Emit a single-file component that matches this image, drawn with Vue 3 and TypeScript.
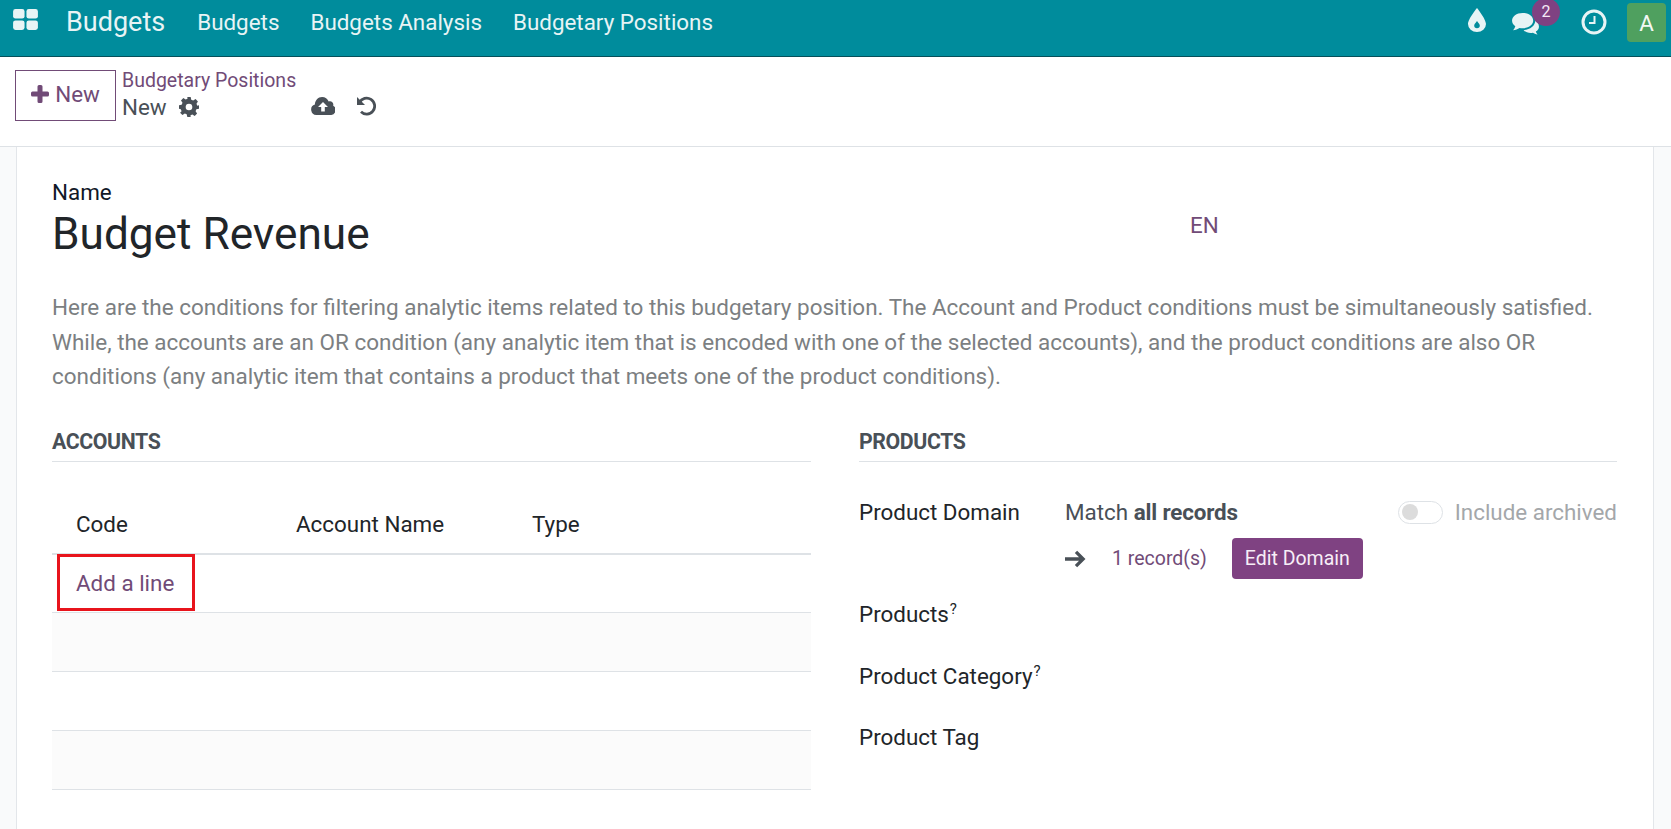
<script setup lang="ts">
const navItems: string[] = ['Budgets', 'Budgets Analysis', 'Budgetary Positions']
const columns: { label: string; width: string }[] = [
  { label: 'Code', width: '220px' },
  { label: 'Account Name', width: '236px' },
  { label: 'Type', width: '1fr' },
]
</script>

<template>
  <div class="page">
    <header class="navbar">
      <svg class="apps" viewBox="0 0 26 22" width="25" height="21">
        <rect x="0" y="0" width="12" height="10" rx="2.5" fill="#e8f4f5" />
        <rect x="14" y="0" width="12" height="10" rx="2.5" fill="#e8f4f5" />
        <rect x="0" y="12" width="12" height="10" rx="2.5" fill="#e8f4f5" />
        <rect x="14" y="12" width="12" height="10" rx="2.5" fill="#e8f4f5" />
      </svg>
      <span class="brand">Budgets</span>
      <nav class="menu">
        <span v-for="item in navItems" :key="item">{{ item }}</span>
      </nav>
      <div class="systray">
        <svg class="drop" viewBox="0 0 18 24" width="18" height="24">
          <path fill-rule="evenodd" d="M9 0C9 0 0 11 0 16a9 8 0 0 0 18 0C18 11 9 0 9 0ZM9 13c-2 2.5-2.800 3.600-2.800 4.600a2.800 2.600 0 0 0 5.600 0C11.800 16.600 11 15.500 9 13Z" fill="#e8f4f5" />
        </svg>
        <div class="chat">
          <svg viewBox="0 0 30 26" width="29" height="25">
            <path d="M12 2C5.500 2 1 5.600 1 10c0 2.400 1.300 4.400 3.400 5.800C4 17.400 3 18.800 2 20c2.500-.3 5-1.200 6.800-2.400 1 .2 2.100.4 3.200.4 6.500 0 11-3.600 11-8s-4.500-8-11-8Z" fill="#e8f4f5" />
            <path d="M25 8.500c.1.500.2 1 .2 1.500 0 5.500-5.600 9.600-12.200 9.900 1.700 1.900 4.500 3 7.500 3 .8 0 1.500-.1 2.200-.2 1.200.9 2.800 1.600 4.800 1.800-.8-.9-1.500-2-1.800-3.100 2-1.200 3.300-3 3.300-5.100 0-3-1.700-5.700-4-7.800Z" fill="#e8f4f5" />
          </svg>
          <span class="badge">2</span>
        </div>
        <svg class="clock" viewBox="0 0 26 26" width="26" height="26">
          <circle cx="13" cy="13" r="11" fill="none" stroke="#e8f4f5" stroke-width="3" />
          <path d="M13.500 7v7H8" fill="none" stroke="#e8f4f5" stroke-width="2" />
        </svg>
        <span class="avatar">A</span>
      </div>
    </header>

    <section class="control">
      <button class="new-btn" type="button">
        <svg viewBox="0 0 18 18" width="18" height="18">
          <path d="M8 0h2a1.500 1.500 0 0 1 1.500 1.500v5h5A1.500 1.500 0 0 1 18 8v2a1.500 1.500 0 0 1-1.500 1.500h-5v5A1.500 1.500 0 0 1 10 18H8a1.500 1.500 0 0 1-1.500-1.500v-5h-5A1.500 1.500 0 0 1 0 10V8a1.500 1.500 0 0 1 1.500-1.500h5v-5A1.500 1.500 0 0 1 8 0Z" fill="#714b77" />
        </svg>
        <span>New</span>
      </button>
      <div class="crumbs">
        <a class="crumb-link">Budgetary Positions</a>
        <div class="crumb-current">
          <span>New</span>
          <svg viewBox="0 0 24 24" width="20" height="20">
            <path fill-rule="evenodd" d="M10 0h4l.7 3.300 2.300 1 2.900-1.800 2.800 2.800L21 8.200l.9 2.200L24 10v4l-3.200.8-.9 2.200 1.800 2.900-2.800 2.800-2.900-1.800-2.200.9L14 24h-4l-.8-3.200-2.200-.9-2.900 1.800-2.800-2.800L3.100 17l-.9-2.200L0 14v-4l3.200-.7 1-2.300-1.800-2.900 2.800-2.800L8 3.100l2.200-.9ZM12 8a4 4 0 1 0 0 8 4 4 0 0 0 0-8Z" fill="#495057" />
          </svg>
        </div>
      </div>
      <div class="save-icons">
        <svg viewBox="0 0 26 20" width="24" height="18">
          <path fill-rule="evenodd" d="M6 20a6 6 0 0 1-2-11.700C4 4 7.500 0 12 0c3.400 0 6.200 2 7.300 5 .5-.2 1-.3 1.500-.3 2 0 3.700 1.700 3.700 3.800 0 .4-.1.800-.2 1.100A5.600 5.600 0 0 1 21 20ZM13 5.500 7.500 11h3.500v5h4v-5h3.500Z" fill="#495057" />
        </svg>
        <svg viewBox="0 0 20 20" width="20" height="20">
          <path d="M3.500 6.500A8 8 0 1 1 5 15.800" fill="none" stroke="#495057" stroke-width="2.800" />
          <path d="M1 1 1 9 9 9Z" fill="#495057" />
        </svg>
      </div>
    </section>

    <main class="canvas">
      <div class="sheet">
        <div class="title-block">
          <div class="name-label">Name</div>
          <div class="title-row">
            <h1>Budget Revenue</h1>
            <span class="lang">EN</span>
          </div>
        </div>
        <p class="help">
          Here are the conditions for filtering analytic items related to this budgetary position. The Account and Product conditions must be simultaneously satisfied. While, the accounts are an OR condition (any analytic item that is encoded with one of the selected accounts), and the product conditions are also OR conditions (any analytic item that contains a product that meets one of the product conditions).
        </p>
        <div class="groups">
          <section class="group">
            <h2>ACCOUNTS</h2>
            <div class="table">
              <div class="t-head">
                <span v-for="col in columns" :key="col.label" :style="{ width: col.width }">{{ col.label }}</span>
              </div>
              <div class="t-row add-row"><span class="add-line">Add a line</span></div>
              <div class="t-row odd"></div>
              <div class="t-row"></div>
              <div class="t-row odd"></div>
            </div>
          </section>
          <section class="group">
            <h2>PRODUCTS</h2>
            <div class="fields">
              <div class="field domain-field">
                <label>Product Domain</label>
                <div class="domain">
                  <div class="match">
                    <span>Match <b>all records</b></span>
                    <span class="archived"><i class="toggle"></i>Include archived</span>
                  </div>
                  <div class="records">
                    <svg viewBox="0 0 20 18" width="22" height="20">
                      <path d="M0 9h16M10 2.500 16.500 9 10 15.500" fill="none" stroke="#495057" stroke-width="3" />
                    </svg>
                    <span class="count">1 record(s)</span>
                    <button class="edit" type="button">Edit Domain</button>
                  </div>
                </div>
              </div>
              <div class="field products"><label>Products<sup>?</sup></label></div>
              <div class="field category"><label>Product Category<sup>?</sup></label></div>
              <div class="field tag"><label>Product Tag</label></div>
            </div>
          </section>
        </div>
      </div>
    </main>
  </div>
</template>

<style>
html, body { margin: 0; background: #fff; overflow: hidden; }
</style>

<style scoped>
.page { width: 1671px; height: 829px; display: flex; flex-direction: column; font-family: Roboto, "Liberation Sans", sans-serif; font-size: 22.4px; color: #212529; overflow: hidden; }
.navbar { height: 57px; flex: none; box-sizing: border-box; background: #008c9c; border-bottom: 1px solid #05505a; display: flex; align-items: center; color: #e8f4f5; padding: 0 5px 11px 13px; }
.apps { margin-top: -6px; }
.brand { font-size: 27px; margin-left: 28px; margin-top: -2px; }
.menu { display: flex; gap: 31px; margin-left: 32px; font-size: 22.4px; margin-top: -2px; }
.systray { margin-left: auto; display: flex; align-items: center; }
.drop { margin-right: 25px; margin-top: -5px; }
.chat { position: relative; width: 29px; height: 25px; margin-right: 41px; margin-top: 1px; }
.badge { position: absolute; left: 21px; top: -13px; width: 28px; height: 28px; border-radius: 50%; background: #7f4282; color: #f5eaf6; font-size: 16px; display: flex; align-items: center; justify-content: center; }
.clock { margin-right: 20px; margin-top: -2px; }
.avatar { width: 39px; height: 39px; border-radius: 4px; background: #4fa05f; color: #f3f8f4; font-size: 22.4px; display: flex; align-items: center; justify-content: center; }

.control { height: 90px; flex: none; background: #fff; border-bottom: 1px solid #dee2e6; display: flex; box-sizing: border-box; align-items: flex-start; padding-left: 15px; }
.new-btn { width: 101px; height: 51px; margin-top: 13px; border: 1px solid #714b77; background: #fff; color: #714b77; font: inherit; font-size: 22.4px; display: flex; align-items: center; justify-content: center; gap: 6px; padding: 0 0 4px; }
.crumbs { margin-left: 6px; margin-top: 11px; width: 189px; }
.crumb-link { display: block; color: #714b77; font-size: 19.5px; line-height: 26px; }
.crumb-current { display: flex; align-items: center; gap: 12px; font-size: 22.4px; line-height: 26px; color: #495057; }
.save-icons { display: flex; align-items: center; gap: 21px; margin-top: 39px; }

.canvas { flex: 1; background: #f9fafb; padding: 0 17px 0 16px; min-height: 0; }
.sheet { background: #fff; height: 100%; border-left: 1px solid #e3e6ea; border-right: 1px solid #e3e6ea; padding: 31px 37px 0 35px; box-sizing: border-box; }
.name-label { font-size: 22.4px; line-height: 28px; color: #111827; }
.title-row { display: flex; align-items: center; }
h1 { margin: 0; font-size: 44.2px; font-weight: 400; line-height: 56px; color: #212529; width: 1138px; }
.lang { color: #714b77; font-size: 22.4px; margin-top: -18px; }
.help { margin: 28px 0 0; color: #7c7f82; font-size: 22.48px; line-height: 34.5px; }
.groups { display: grid; grid-template-columns: 759px 758px; column-gap: 48px; margin-top: 33.5px; }
h2 { margin: 0; font-size: 21.3px; font-weight: 700; color: #495057; line-height: 30px; padding-bottom: 4px; border-bottom: 1px solid #dee2e6; letter-spacing: -0.4px; }
.table { margin-top: 31px; }
.t-head { display: flex; box-sizing: border-box; height: 62px; padding-top: 2px; align-items: center; border-bottom: 2px solid #dee2e6; padding-left: 24px; font-size: 22.4px; }
.t-head span:last-child { width: auto !important; }
.t-row { height: 58px; border-bottom: 1px solid #dee2e6; box-sizing: content-box; }
.odd { background: #fbfbfb; }
.add-row { position: relative; display: flex; align-items: center; padding: 0 0 2px 24px; box-sizing: border-box; height: 58px; color: #714b77; }
.add-row::before { content: ""; position: absolute; left: 5px; top: -1px; width: 132px; height: 51px; border: 3px solid #e8141c; }
.add-line { position: relative; }
.fields { margin-top: 35px; }
.field { display: flex; }
.field label { width: 206px; flex: none; font-size: 22.4px; line-height: 30px; color: #212529; }
sup { font-size: 15px; line-height: 0; color: #212529; margin-left: 1px; }
.domain { flex: 1; }
.match { display: flex; justify-content: space-between; line-height: 30px; color: #495057; }
.match b { font-weight: 700; letter-spacing: -0.15px; }
.archived { display: flex; align-items: center; color: #a4a7aa; }
.toggle { width: 45px; height: 23px; border: 1px solid #dee2e6; border-radius: 12px; box-sizing: border-box; margin-right: 12px; display: flex; align-items: center; padding-left: 3px; }
.toggle::before { content: ""; width: 16px; height: 16px; border-radius: 50%; background: #dcdcdc; }
.records { display: flex; align-items: center; margin-top: 11px; }
.count { color: #714b77; font-size: 19.5px; margin-left: 25px; }
.edit { margin-left: 25px; width: 131px; height: 41px; padding: 0; border: none; border-radius: 4px; background: #7f4282; color: #f7eef7; font: inherit; font-size: 19.5px; }
.products { margin-top: 20px; }
.category { margin-top: 32px; }
.tag { margin-top: 31px; }
</style>
